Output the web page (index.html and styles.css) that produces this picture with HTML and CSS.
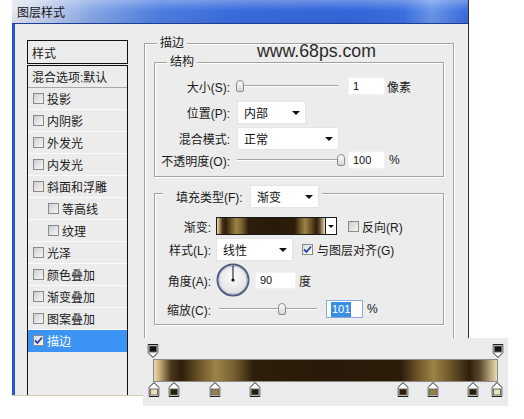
FILE: index.html
```html
<!DOCTYPE html>
<html lang="zh-CN">
<head>
<meta charset="utf-8">
<title>图层样式</title>
<link rel="stylesheet" href="styles.css">
</head>
<body>
<div class="window">
  <div class="titlebar">图层样式</div>
  <div class="client">
    <aside class="sidebar">
      <div class="list-head">样式</div>
      <ul class="list">
        <li class="item first">混合选项:默认</li>
        <li class="item"><span class="cb"></span>投影</li>
        <li class="item"><span class="cb"></span>内阴影</li>
        <li class="item"><span class="cb"></span>外发光</li>
        <li class="item"><span class="cb"></span>内发光</li>
        <li class="item"><span class="cb"></span>斜面和浮雕</li>
        <li class="item sub"><span class="cb"></span>等高线</li>
        <li class="item sub"><span class="cb"></span>纹理</li>
        <li class="item"><span class="cb"></span>光泽</li>
        <li class="item"><span class="cb"></span>颜色叠加</li>
        <li class="item"><span class="cb"></span>渐变叠加</li>
        <li class="item"><span class="cb"></span>图案叠加</li>
        <li class="item selected"><span class="cb checked"><svg width="9" height="9" viewBox="0 0 9 9"><path d="M1 4.5 L3.5 7 L8 1.5" fill="none" stroke="#2a3fa8" stroke-width="1.8"/></svg></span>描边</li>
      </ul>
    </aside>
    <main class="main">
      <fieldset class="group outer">
        <legend>描边</legend>
        <fieldset class="group struct">
          <legend>结构</legend>
          <div class="row r1">
            <span class="lbl">大小(S):</span>
            <div class="slider w101"><span class="thumb" style="left:-1px"></span></div>
            <span class="input">1</span>
            <span class="unit">像素</span>
          </div>
          <div class="row r2">
            <span class="lbl">位置(P):</span>
            <span class="select w69">内部<i class="arrow"></i></span>
          </div>
          <div class="row r3">
            <span class="lbl">混合模式:</span>
            <span class="select w102">正常<i class="arrow"></i></span>
          </div>
          <div class="row r4">
            <span class="lbl">不透明度(O):</span>
            <div class="slider w101"><span class="thumb" style="left:100px"></span></div>
            <span class="input">100</span>
            <span class="unit pct">%</span>
          </div>
        </fieldset>
        <fieldset class="group fill">
          <legend class="fill-legend"><span class="legend-inner"><span class="legend-label">填充类型(F):</span><span class="select w69">渐变<i class="arrow"></i></span></span></legend>
          <div class="row f1">
            <span class="lbl">渐变:</span>
            <span class="swatch"><span class="swatch-fill"></span><span class="swatch-btn"><i class="arrow small"></i></span></span>
            <span class="check-label c1"><span class="cb"></span>反向(R)</span>
          </div>
          <div class="row f2">
            <span class="lbl">样式(L):</span>
            <span class="select w77">线性<i class="arrow"></i></span>
            <span class="check-label c2"><span class="cb checked"><svg width="9" height="9" viewBox="0 0 9 9"><path d="M1 4.5 L3.5 7 L8 1.5" fill="none" stroke="#2a3fa8" stroke-width="1.8"/></svg></span>与图层对齐(G)</span>
          </div>
          <div class="row f3">
            <span class="lbl">角度(A):</span>
            <svg class="dial" width="34" height="34" viewBox="0 0 34 34">
              <defs>
                <radialGradient id="dg" cx="50%" cy="40%" r="60%">
                  <stop offset="0" stop-color="#fbfbfb"/>
                  <stop offset="1" stop-color="#e0e0e0"/>
                </radialGradient>
              </defs>
              <circle cx="17" cy="17" r="15.5" fill="url(#dg)" stroke="#4f5d7e" stroke-width="2"/>
              <circle cx="17" cy="17" r="14" fill="none" stroke="#b9c1d2" stroke-width="1"/>
              <line x1="17" y1="17" x2="17" y2="2.5" stroke="#111" stroke-width="1"/>
              <circle cx="17" cy="17" r="1.6" fill="#111"/>
            </svg>
            <span class="input w41">90</span>
            <span class="unit deg">度</span>
          </div>
          <div class="row f4">
            <span class="lbl">缩放(C):</span>
            <div class="slider w98"><span class="thumb" style="left:59px"></span></div>
            <span class="input focused"><span class="sel">101</span></span>
            <span class="unit pct">%</span>
          </div>
        </fieldset>
      </fieldset>
    </main>
  </div>
  <div class="watermark">www.68ps.com</div>
</div>

<div class="grad-editor">
  <div class="ge-track">
    <div class="stops top">
      <svg class="stop" style="left:0%" width="11" height="14" viewBox="0 0 11 14"><path d="M0.5 0.5 H10.5 V8.5 L5.5 13.5 L0.5 8.5 Z" fill="#fff" stroke="#1e1e1e"/><rect x="1.5" y="1.5" width="8" height="7" fill="#6b6b6b"/><rect x="2.5" y="2.5" width="6" height="5" fill="#111"/></svg>
      <svg class="stop" style="left:100%" width="11" height="14" viewBox="0 0 11 14"><path d="M0.5 0.5 H10.5 V8.5 L5.5 13.5 L0.5 8.5 Z" fill="#fff" stroke="#1e1e1e"/><rect x="1.5" y="1.5" width="8" height="7" fill="#6b6b6b"/><rect x="2.5" y="2.5" width="6" height="5" fill="#111"/></svg>
    </div>
    <div class="ge-bar"></div>
    <div class="stops bottom">
      <svg class="stop" style="left:0.3%" width="11" height="15" viewBox="0 0 11 15"><path d="M5.5 0.5 L10.5 5.5 V14.5 H0.5 V5.5 Z" fill="#fff" stroke="#1e1e1e"/><rect x="1.5" y="6.5" width="8" height="7" fill="#6b6b6b"/><rect x="2.5" y="7.5" width="6" height="5" fill="#efdfb6"/></svg>
      <svg class="stop" style="left:6.1%" width="11" height="15" viewBox="0 0 11 15"><path d="M5.5 0.5 L10.5 5.5 V14.5 H0.5 V5.5 Z" fill="#fff" stroke="#1e1e1e"/><rect x="1.5" y="6.5" width="8" height="7" fill="#6b6b6b"/><rect x="2.5" y="7.5" width="6" height="5" fill="#2c1c0a"/></svg>
      <svg class="stop" style="left:18%" width="11" height="15" viewBox="0 0 11 15"><path d="M5.5 0.5 L10.5 5.5 V14.5 H0.5 V5.5 Z" fill="#fff" stroke="#1e1e1e"/><rect x="1.5" y="6.5" width="8" height="7" fill="#6b6b6b"/><rect x="2.5" y="7.5" width="6" height="5" fill="#9b7f42"/></svg>
      <svg class="stop" style="left:29.6%" width="11" height="15" viewBox="0 0 11 15"><path d="M5.5 0.5 L10.5 5.5 V14.5 H0.5 V5.5 Z" fill="#fff" stroke="#1e1e1e"/><rect x="1.5" y="6.5" width="8" height="7" fill="#6b6b6b"/><rect x="2.5" y="7.5" width="6" height="5" fill="#2c1d0b"/></svg>
      <svg class="stop" style="left:72.5%" width="11" height="15" viewBox="0 0 11 15"><path d="M5.5 0.5 L10.5 5.5 V14.5 H0.5 V5.5 Z" fill="#fff" stroke="#1e1e1e"/><rect x="1.5" y="6.5" width="8" height="7" fill="#6b6b6b"/><rect x="2.5" y="7.5" width="6" height="5" fill="#2b1c0b"/></svg>
      <svg class="stop" style="left:81.2%" width="11" height="15" viewBox="0 0 11 15"><path d="M5.5 0.5 L10.5 5.5 V14.5 H0.5 V5.5 Z" fill="#fff" stroke="#1e1e1e"/><rect x="1.5" y="6.5" width="8" height="7" fill="#6b6b6b"/><rect x="2.5" y="7.5" width="6" height="5" fill="#9b7f42"/></svg>
      <svg class="stop" style="left:92.8%" width="11" height="15" viewBox="0 0 11 15"><path d="M5.5 0.5 L10.5 5.5 V14.5 H0.5 V5.5 Z" fill="#fff" stroke="#1e1e1e"/><rect x="1.5" y="6.5" width="8" height="7" fill="#6b6b6b"/><rect x="2.5" y="7.5" width="6" height="5" fill="#2c1d0b"/></svg>
      <svg class="stop" style="left:99.7%" width="11" height="15" viewBox="0 0 11 15"><path d="M5.5 0.5 L10.5 5.5 V14.5 H0.5 V5.5 Z" fill="#fff" stroke="#1e1e1e"/><rect x="1.5" y="6.5" width="8" height="7" fill="#6b6b6b"/><rect x="2.5" y="7.5" width="6" height="5" fill="#efe0bc"/></svg>
    </div>
  </div>
</div>
</body>
</html>
```

FILE: styles.css
```css
* { box-sizing: border-box; }
html, body { margin: 0; padding: 0; }
body {
  position: relative;
  width: 524px;
  height: 419px;
  overflow: hidden;
  background: #fff;
  font-family: "Liberation Sans", "Noto Sans CJK SC", sans-serif;
  font-size: 12px;
  color: #1a1a1a;
  --grad: linear-gradient(90deg, #eadaae 0%, #c9b27c 1.5%, #4a3618 5%, #2d1e0b 8%, #6a5226 13%, #9e8346 18%, #7a6130 23%, #2e1f0c 29%, #291a09 50%, #2c1d0b 72%, #6e5628 77%, #9e8346 81.5%, #715a2a 86%, #2e1f0c 92%, #5a4a2c 95%, #b4a27c 98%, #ecdcb6 100%);
}

/* window frame */
.window {
  position: relative;
  margin-left: 12px;
  width: 457px;
  height: 396px;
  display: flex;
  flex-direction: column;
  border-right: 1px solid #3c3018;
  border-bottom: 1px solid #d6cba6;
  overflow: hidden;
  background: #ececec;
}
.titlebar {
  flex: none;
  height: 24px;
  display: flex;
  align-items: center;
  padding: 0 0 1px 5px;
  border-bottom: 1px solid #1b3f97;
  color: #141414;
  background:
    linear-gradient(180deg, rgba(255,255,255,.28) 0%, rgba(255,255,255,0) 45%, rgba(0,0,60,.06) 100%),
    linear-gradient(90deg, #e3e8f1 0%, #c6d2ec 7%, #86a6e6 18%, #4f7fe0 32%, #3a6cdc 50%, #3467da 75%, #3c71e0 86%, #6c97ea 92%, #3a6ddd 100%);
}
.client {
  flex: 1;
  min-height: 0;
  display: flex;
  border-left: 3px solid #2458d8;
}

/* left style list */
.sidebar {
  flex: none;
  width: 113px;
  padding: 16px 0 0 12px;
  display: flex;
  flex-direction: column;
}
.list-head {
  flex: none;
  height: 24px;
  margin-bottom: 1px;
  border: 1px solid #111;
  padding-left: 4px;
  display: flex;
  align-items: center;
}
.list {
  flex: 1;
  margin: 0;
  padding: 0;
  list-style: none;
  border: 1px solid #111;
  border-bottom: 0;
}
.item {
  height: 22px;
  display: flex;
  align-items: center;
  gap: 3px;
  padding-left: 5px;
  border-bottom: 1px solid #fbfbfb;
  white-space: nowrap;
}
.item.first { padding-left: 4px; border-bottom-color: #a8a8a8; }
.item.sub { padding-left: 20px; }
.item.selected { background: #3b94f3; border-bottom-color: #3b94f3; color: #fff; }

.cb {
  flex: none;
  width: 11px;
  height: 11px;
  border: 1px solid #8a8a8a;
  background: linear-gradient(135deg, #cfcfcf, #f7f7f7);
  display: flex;
  align-items: center;
  justify-content: center;
}
.cb.checked { background: linear-gradient(135deg, #d8d8d8, #ffffff); }
.cb svg { display: block; }

/* right side */
.main {
  flex: 1;
  min-width: 0;
  padding: 12px 0 0 16px;
}
.group {
  margin: 0;
  padding: 0;
  min-width: 0;
  border: 1px solid #a2a2a2;
  box-shadow: inset 1px 1px 0 #fff, 1px 1px 0 #fff;
}
.group > legend {
  padding: 0 3px;
  margin-left: 12px;
  line-height: 15px;
  background: #ececec;
}
.outer { width: 310px; padding-bottom: 90px; }
.struct, .fill { margin: 4px 9px 0 9px; }
.struct { padding: 7px 0 7px; }
.fill { margin-top: 2px; padding: 9px 0 6px; }
.group > legend.fill-legend {
  margin-left: 8px;
  padding: 6px 3px 0 13px;
  line-height: normal;
}
.legend-inner { display: flex; align-items: center; height: 23px; }
.legend-label { width: 74px; white-space: nowrap; }

.row { display: flex; align-items: center; }
.lbl { flex: none; text-align: right; white-space: nowrap; }
.struct .lbl { width: 75px; margin-right: 7px; }
.fill .lbl { width: 56px; margin-right: 5px; }

.r1 { height: 18px; }
.r2 { margin-top: 6px; height: 23px; }
.r3 { margin-top: 3px; height: 23px; }
.r4 { margin-top: 1px; height: 18px; }
.f1 { height: 18px; }
.f2 { margin-top: 3px; height: 23px; }
.f3 { margin-top: 2px; height: 34px; }
.f4 { margin-top: 3px; height: 18px; }

.select {
  flex: none;
  display: flex;
  align-items: center;
  justify-content: space-between;
  height: 23px;
  padding: 0 5px 0 6px;
  background: #fff;
  border: 1px solid #e4e4e4;
  color: #111;
}
.w69 { width: 69px; }
.w77 { width: 77px; }
.w102 { width: 102px; }
.arrow {
  width: 0;
  height: 0;
  border-left: 4px solid transparent;
  border-right: 4px solid transparent;
  border-top: 4px solid #111;
}
.arrow.small {
  border-left-width: 3px;
  border-right-width: 3px;
  border-top-width: 3px;
}

.input {
  flex: none;
  height: 18px;
  width: 37px;
  background: #fff;
  border: 1px solid #f2f2f2;
  padding-left: 4px;
  font-size: 11px;
  display: flex;
  align-items: center;
  color: #111;
}
.input.w41 { width: 41px; height: 17px; margin-left: 5px; }
.input.focused { border-color: #86aadb; margin-left: 9px; }
.sel { background: #3a8ee6; color: #fff; line-height: 15px; padding: 0 1px; }
.unit { margin-left: 2px; }
.unit.pct { margin-left: 4px; }
.unit.deg { margin-left: 3px; }

.slider {
  flex: none;
  position: relative;
  height: 14px;
  background:
    linear-gradient(#a4a4a4, #a4a4a4) 0 6px / 100% 1px no-repeat,
    linear-gradient(#fff, #fff) 0 7px / 100% 1px no-repeat;
}
.w101 { width: 101px; margin-right: 10px; }
.w98 { width: 98px; margin-left: 3px; }
.thumb {
  position: absolute;
  top: 1px;
  width: 8px;
  height: 12px;
  border: 1px solid #8c8c8c;
  border-radius: 4px 4px 2px 2px;
  background: linear-gradient(#fdfdfd, #d6d6d6);
}

.swatch {
  flex: none;
  display: flex;
  width: 121px;
  height: 18px;
  border: 1px solid #1a1a1a;
}
.swatch-fill { flex: 1; background: var(--grad); }
.swatch-btn {
  flex: none;
  width: 11px;
  background: #fff;
  border-left: 1px solid #1a1a1a;
  display: flex;
  align-items: center;
  justify-content: center;
}
.check-label { display: flex; align-items: center; white-space: nowrap; }
.c1 { margin-left: 11px; gap: 3px; }
.c2 { margin-left: 9px; gap: 4px; }
.dial { flex: none; display: block; }

.watermark {
  position: absolute;
  left: 245px;
  top: 41px;
  font-family: "Liberation Sans", Arial, sans-serif;
  font-size: 17.7px;
  line-height: 20px;
  color: #2a2a2a;
}

/* gradient editor overlay */
.grad-editor {
  position: absolute;
  left: 143px;
  top: 338px;
  width: 365px;
  height: 68px;
  padding-left: 10px;
  background: #ebebeb;
}
.ge-track { width: 345px; display: flex; flex-direction: column; }
.stops { position: relative; }
.stops.top { height: 21px; }
.stops.bottom { height: 15px; }
.stop { position: absolute; display: block; transform: translateX(-50%); }
.stops.top .stop { top: 6px; }
.stops.bottom .stop { top: 0; }
.ge-bar {
  height: 23px;
  border: 1px solid #8a8a8a;
  background: var(--grad);
}
```
